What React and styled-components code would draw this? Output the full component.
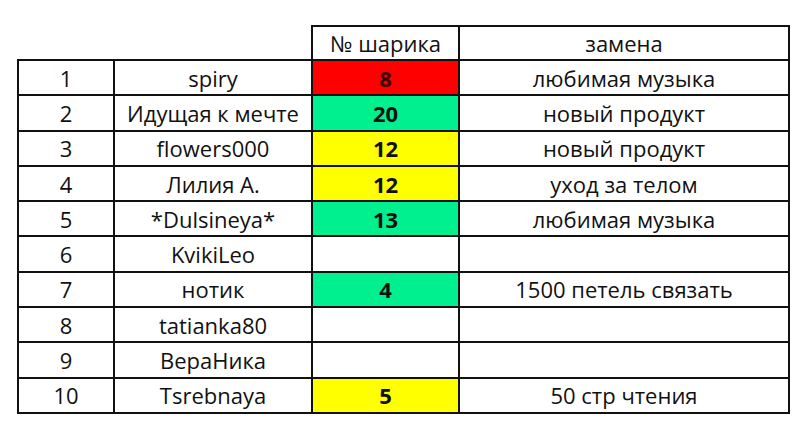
import React from "react";
import styled, { createGlobalStyle } from "styled-components";

const Global = createGlobalStyle`
  html, body { margin: 0; padding: 0; background: #fff; }
  body { font-family: "Open Sans", "Liberation Sans", sans-serif; }
`;

const Page = styled.div`
  width: 800px;
  height: 425px;
  padding: 25px 0 0 17px;
  box-sizing: border-box;
  background: #fff;
`;

const Table = styled.table`
  border-collapse: collapse;
  table-layout: fixed;
  width: 771px;
  font-size: 22px;
  color: #111;
`;

const HeadRow = styled.tr`
  height: 34px;
`;

const Row = styled.tr`
  height: 35.3px;
`;

const Blank = styled.th`
  border: none;
  padding: 0;
`;

const HeadCell = styled.th`
  border: 2.5px solid #111;
  font-weight: 400;
  padding: 0;
  text-align: center;
  vertical-align: middle;
  line-height: 1;
`;

const Cell = styled.td`
  border: 2.5px solid #111;
  padding: 0;
  text-align: center;
  vertical-align: middle;
  line-height: 1;
  white-space: nowrap;
  background: ${(p) => p.$bg || "#fff"};
  font-weight: ${(p) => (p.$bold ? 700 : 400)};
  color: ${(p) => p.$color || "#111"};
`;

const COLORS = {
  red: "#ff0000",
  green: "#00f08f",
  yellow: "#ffff00",
};

const rows = [
  [1, "spiry", "8", "red", "любимая музыка"],
  [2, "Идущая к мечте", "20", "green", "новый продукт"],
  [3, "flowers000", "12", "yellow", "новый продукт"],
  [4, "Лилия А.", "12", "yellow", "уход за телом"],
  [5, "*Dulsineya*", "13", "green", "любимая музыка"],
  [6, "KvikiLeo", "", null, ""],
  [7, "нотик", "4", "green", "1500 петель связать"],
  [8, "tatianka80", "", null, ""],
  [9, "ВераНика", "", null, ""],
  [10, "Tsrebnaya", "5", "yellow", "50 стр чтения"],
];

export default function App() {
  return (
    <Page>
      <Global />
      <Table>
        <colgroup>
          <col style={{ width: 96 }} />
          <col style={{ width: 198 }} />
          <col style={{ width: 147 }} />
          <col style={{ width: 330 }} />
        </colgroup>
        <thead>
          <HeadRow>
            <Blank />
            <Blank />
            <HeadCell>№ шарика</HeadCell>
            <HeadCell>замена</HeadCell>
          </HeadRow>
        </thead>
        <tbody>
          {rows.map(([n, name, num, c, rep]) => (
            <Row key={n}>
              <Cell>{n}</Cell>
              <Cell>{name}</Cell>
              <Cell $bold $bg={c ? COLORS[c] : undefined} $color={c === "red" ? "#3a0000" : "#111"}>
                {num}
              </Cell>
              <Cell>{rep}</Cell>
            </Row>
          ))}
        </tbody>
      </Table>
    </Page>
  );
}
